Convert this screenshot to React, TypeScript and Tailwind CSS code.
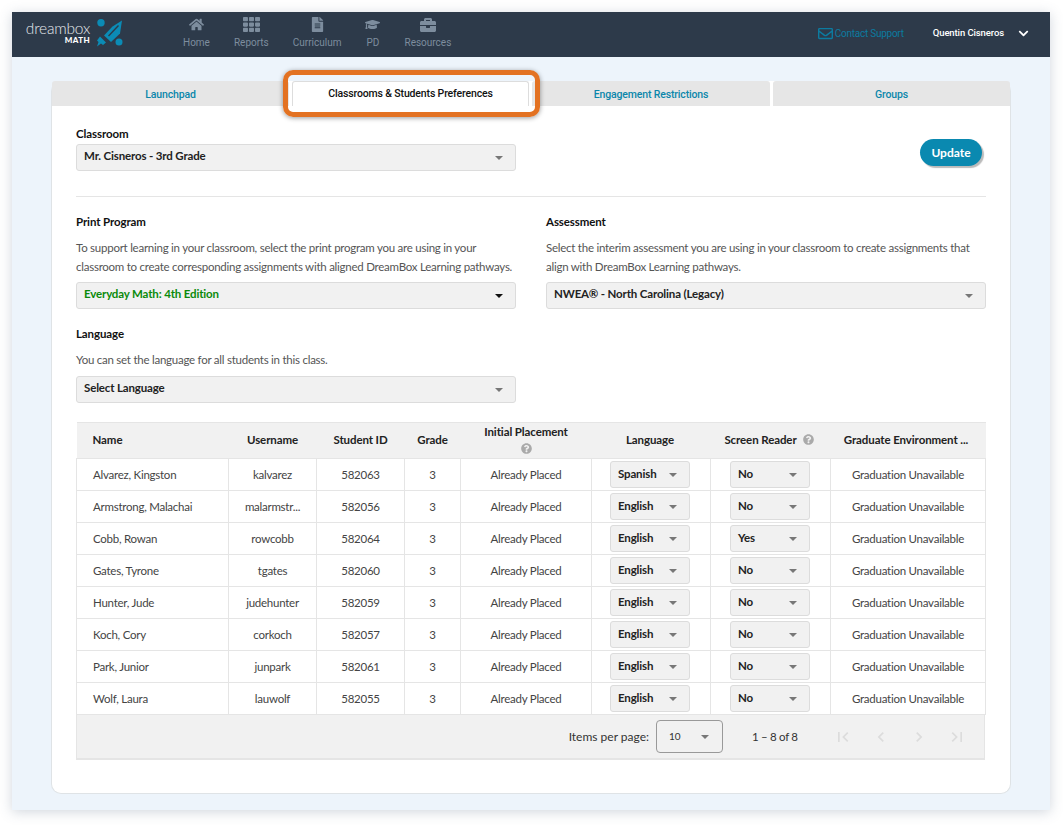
import { FaBriefcase, FaChevronDown, FaFileAlt, FaGraduationCap, FaHome, FaQuestionCircle, FaRegEnvelope, FaTh } from 'react-icons/fa';

const navItems = [
  { label: 'Home', Icon: FaHome, size: 15 },
  { label: 'Reports', Icon: FaTh, size: 17 },
  { label: 'Curriculum', Icon: FaFileAlt, size: 15 },
  { label: 'PD', Icon: FaGraduationCap, size: 15 },
  { label: 'Resources', Icon: FaBriefcase, size: 16 },
];

const students = [
  { name: 'Alvarez, Kingston', username: 'kalvarez', id: '582063', language: 'Spanish', reader: 'No' },
  { name: 'Armstrong, Malachai', username: 'malarmstr...', id: '582056', language: 'English', reader: 'No' },
  { name: 'Cobb, Rowan', username: 'rowcobb', id: '582064', language: 'English', reader: 'Yes' },
  { name: 'Gates, Tyrone', username: 'tgates', id: '582060', language: 'English', reader: 'No' },
  { name: 'Hunter, Jude', username: 'judehunter', id: '582059', language: 'English', reader: 'No' },
  { name: 'Koch, Cory', username: 'corkoch', id: '582057', language: 'English', reader: 'No' },
  { name: 'Park, Junior', username: 'junpark', id: '582061', language: 'English', reader: 'No' },
  { name: 'Wolf, Laura', username: 'lauwolf', id: '582055', language: 'English', reader: 'No' },
];

const pagerPaths = [
  'M18.41 16.59L13.82 12l4.59-4.59L17 6l-6 6 6 6zM6 6h2v12H6z',
  'M15.41 7.41L14 6l-6 6 6 6 1.41-1.41L10.83 12z',
  'M10 6L8.59 7.41 13.17 12l-4.58 4.59L10 18l6-6z',
  'M5.59 7.41L10.18 12l-4.59 4.59L7 18l6-6-6-6zM16 6h2v12h-2z',
];

function Caret({ className = 'border-t-[#777]' }: { className?: string }) {
  return <span className={`h-0 w-0 border-x-[4px] border-t-[4px] border-x-transparent ${className}`} />;
}

function SelectBox({ value, dark, green }: { value: string; dark?: boolean; green?: boolean }) {
  return (
    <div className="flex h-[27px] w-[440px] items-center justify-between rounded-[3px] border border-[#dcdcdc] bg-[#f1f1f1] pl-[7px] pr-[12px]">
      <span className={`-mt-[3px] text-[11.5px] font-bold tracking-[-0.15px] ${green ? 'text-[#0a8a0a]' : 'text-[#222]'}`}>{value}</span>
      <Caret className={dark ? 'border-t-[#111]' : 'border-t-[#777]'} />
    </div>
  );
}

function CellSelect({ value, className }: { value: string; className: string }) {
  return (
    <div className={`${className} flex h-[27px] w-[80px] items-center justify-between rounded-[3px] border border-[#dcdcdc] bg-[#f1f1f1] pl-[7px] pr-[12px]`}>
      <span className="-mt-[2px] text-[11.5px] font-bold tracking-[-0.15px] text-[#222]">{value}</span>
      <Caret />
    </div>
  );
}

function Logo() {
  return (
    <div className="flex items-center gap-[5px]">
      <div className="-mt-[5px] flex w-[64px] flex-col items-end">
        <span className="text-[15.5px] leading-[16px] font-light tracking-[-0.2px] text-[#e6e9ec]">dreambox</span>
        <span className="text-[8px] leading-[8px] font-black tracking-[0.4px] text-white">MATH</span>
      </div>
      <svg width="28" height="28" viewBox="0 0 28 28" className="-mt-[3px] text-[#0b8bb5]" fill="currentColor">
        <circle cx="6" cy="3.8" r="3.7" />
        <circle cx="24" cy="23" r="3.5" />
        <path d="M27 1.5 L25 14.5 L16 23 L9 16.5 L17.5 7.5 Z" />
        <path d="M13.5 17 L23.5 6.5" stroke="#2d3a4a" strokeWidth="1.4" />
        <path d="M5 17.5 L11 23.5 L8 26 L6 24.5 L2 27.5 L3.5 23 L2 21.5 Z" />
      </svg>
    </div>
  );
}

function HeaderBar() {
  return (
    <header className="flex h-[45px] items-center bg-[#2d3a4a] pl-[14px] pr-[21px] [font-family:Roboto,sans-serif]">
      <div className="[font-family:Lato,sans-serif]"><Logo /></div>
      <nav className="ml-[60px] -mt-[4px] flex gap-[24px]">
        {navItems.map(({ label, Icon, size }) => (
          <div key={label} className="flex flex-col items-center text-[#7d8d9e]">
            <span className="flex h-[16px] items-center"><Icon size={size} /></span>
            <span className="mt-[3px] text-[10px] leading-[13px]">{label}</span>
          </div>
        ))}
      </nav>
      <div className="ml-auto -mt-[2px] flex items-center gap-[2px] text-[10px] tracking-[-0.25px] text-[#0c7ba0]">
        <FaRegEnvelope size={15} />
        <span>Contact Support</span>
      </div>
      <span className="-mt-[2px] ml-[29px] text-[9.5px] font-medium tracking-[-0.1px] text-white">Quentin Cisneros</span>
      <FaChevronDown size={11} className="-mt-[2px] ml-[14px] text-white" />
    </header>
  );
}

function Tabs() {
  const tab = 'flex items-center justify-center rounded-t-[3px] bg-[#e6e6e6] pt-[2px] [font-family:Roboto,sans-serif] text-[10.5px] font-medium tracking-[-0.15px] text-[#0b86ab]';
  return (
    <div className="flex h-[25px] gap-[3px]">
      <div className={`${tab} w-[237px]`}>Launchpad</div>
      <div className="relative flex w-[237px] items-center justify-center rounded-t-[3px] border-x border-t border-[#dddddd] bg-white [font-family:Roboto,sans-serif] text-[10.5px] font-medium tracking-[-0.15px] text-[#111]">
        <span>Classrooms &amp; Students Preferences</span>
        <div className="absolute -top-[12px] -left-[10px] h-[47px] w-[257px] rounded-[10px] border-[5px] border-[#e37222] shadow-[0_1px_5px_rgba(0,0,0,0.4)]" />
      </div>
      <div className={`${tab} w-[238px]`}>Engagement Restrictions</div>
      <div className={`${tab} flex-1`}>Groups</div>
    </div>
  );
}

function StudentTable() {
  const th = 'border-y border-[#e5e5e5] pb-[2px] text-[11.5px] font-bold tracking-[-0.1px] text-[#222]';
  const td = 'border border-[#e5e5e5] text-center text-[11.5px] tracking-[-0.25px] text-[#444]';
  return (
    <table className="w-[909px] table-fixed border-collapse">
      <colgroup>
        <col className="w-[152px]" />
        <col className="w-[88px]" />
        <col className="w-[88px]" />
        <col className="w-[56px]" />
        <col className="w-[131px]" />
        <col className="w-[119px]" />
        <col className="w-[120px]" />
        <col className="w-[155px]" />
      </colgroup>
      <thead>
        <tr className="h-[36px] bg-[#f1f1f1]">
          <th className={`${th} pl-4 text-left`}>Name</th>
          <th className={th}>Username</th>
          <th className={th}>Student ID</th>
          <th className={th}>Grade</th>
          <th className={th}>
            <div className="-mt-[2px] flex flex-col items-center leading-[15px]">
              Initial Placement
              <FaQuestionCircle size={11} className="mt-[4px] text-[#aaa]" />
            </div>
          </th>
          <th className={`${th} pr-[2px]`}>Language</th>
          <th className={`${th} pr-[3px]`}>
            <span className="inline-flex items-center gap-[6px]">Screen Reader <FaQuestionCircle size={11} className="text-[#aaa]" /></span>
          </th>
          <th className={`${th} pr-[4px]`}>Graduate Environment ...</th>
        </tr>
      </thead>
      <tbody>
        {students.map((s) => (
          <tr key={s.id} className="h-[32px]">
            <td className={`${td} pl-4 !text-left`}>{s.name}</td>
            <td className={td}>{s.username}</td>
            <td className={td}>{s.id}</td>
            <td className={td}>3</td>
            <td className={td}>Already Placed</td>
            <td className={td}><CellSelect value={s.language} className="ml-[18px]" /></td>
            <td className={td}><CellSelect value={s.reader} className="ml-[19px]" /></td>
            <td className={td}>Graduation Unavailable</td>
          </tr>
        ))}
      </tbody>
    </table>
  );
}

function Paginator() {
  return (
    <div className="flex h-[45px] w-[909px] items-center justify-end border-x border-b-2 border-[#e5e5e5] bg-[#f1f1f1] pr-[17px] text-[12px] text-[#333]">
      <span>Items per page:</span>
      <div className="ml-[7px] flex h-[33px] w-[67px] items-center justify-between rounded-[4px] border border-[#999] pl-3 pr-[13px]">
        <span className="text-[10px] text-[#333]">10</span>
        <Caret />
      </div>
      <span className="ml-[29px] w-[67px] text-[11.5px] tracking-[-0.3px]">1 – 8 of 8</span>
      <div className="ml-[14px] flex gap-[18px]">
        {pagerPaths.map((d) => (
          <svg key={d} width="20" height="20" viewBox="0 0 24 24" fill="#dcdcdc"><path d={d} /></svg>
        ))}
      </div>
    </div>
  );
}

export default function App() {
  const label = 'text-[11.5px] leading-[16px] font-bold tracking-[-0.1px] text-[#111]';
  const body = 'text-[11.5px] tracking-[-0.25px] text-[#555]';
  return (
    <div className="h-[825px] w-[1063px] overflow-hidden bg-white pt-3 pl-3 [font-family:Lato,'Liberation_Sans',sans-serif]">
      <div className="h-[798px] w-[1038px] bg-[#edf4fb] shadow-[0_2px_12px_rgba(70,90,120,0.25)]">
        <HeaderBar />
        <main className="pt-[24px] pl-[39px]">
          <div className="h-[713px] w-[960px] rounded-[10px] border border-t-0 border-[#dfe3e6] bg-white">
            <Tabs />
            <div className="pt-[20px] pl-[24px]">
              <div className="flex w-[906px] items-start justify-between">
                <div>
                  <div className={`${label} mb-[2px]`}>Classroom</div>
                  <SelectBox value="Mr. Cisneros - 3rd Grade" />
                </div>
                <button className="mt-[13px] h-[27px] w-[62px] rounded-full bg-[#0a89b0] text-[12px] font-bold text-white shadow-[2px_2px_1px_#bbb]">Update</button>
              </div>
              <hr className="mt-[25px] w-[910px] border-[#e5e5e5]" />
              <div className="mt-[17px] grid w-[910px] grid-cols-[440px_440px] gap-x-[30px]">
                <div>
                  <div className={label}>Print Program</div>
                  <p className={`${body} mt-[8px] mb-[6px] leading-[19px]`}>To support learning in your classroom, select the print program you are using in your classroom to create corresponding assignments with aligned DreamBox Learning pathways.</p>
                  <SelectBox value="Everyday Math: 4th Edition" dark green />
                </div>
                <div>
                  <div className={label}>Assessment</div>
                  <p className={`${body} mt-[8px] mb-[6px] leading-[19px]`}>Select the interim assessment you are using in your classroom to create assignments that align with DreamBox Learning pathways.</p>
                  <SelectBox value="NWEA® - North Carolina (Legacy)" />
                </div>
                <div className="mt-[17px]">
                  <div className={label}>Language</div>
                  <p className={`${body} mt-[8px] mb-[6px] leading-[20px]`}>You can set the language for all students in this class.</p>
                  <SelectBox value="Select Language" />
                </div>
              </div>
              <div className="mt-[19px]">
                <StudentTable />
                <Paginator />
              </div>
            </div>
          </div>
        </main>
      </div>
    </div>
  );
}
